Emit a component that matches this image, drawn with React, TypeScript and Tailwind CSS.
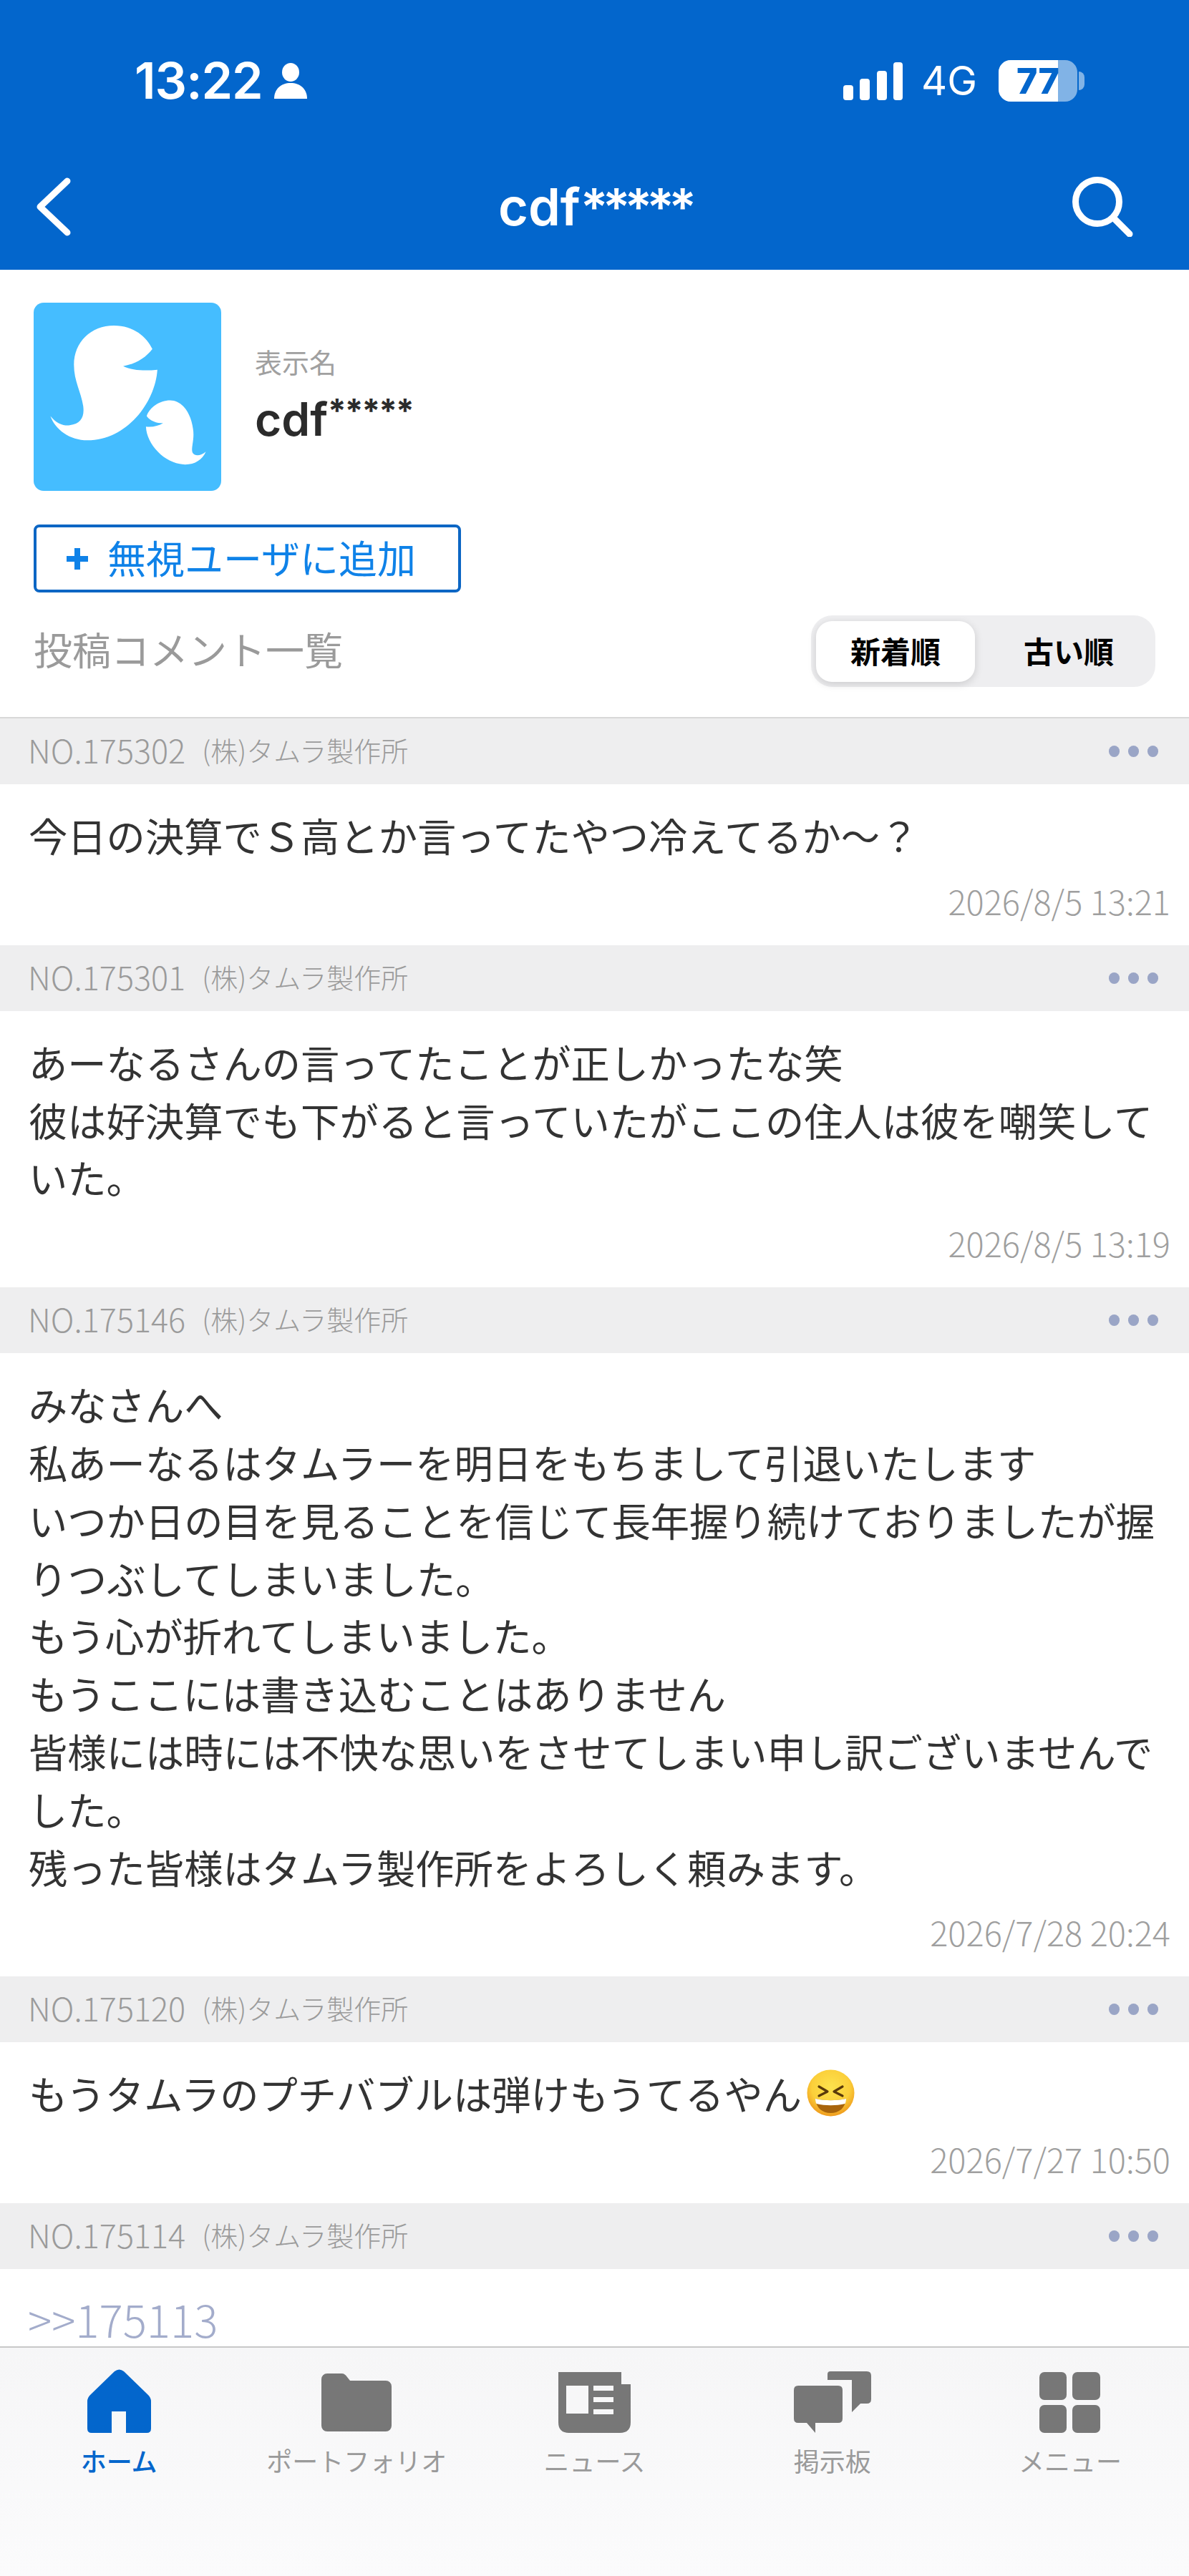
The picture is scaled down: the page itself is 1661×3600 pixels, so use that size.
const posts = [
  {
    no: "NO.175302",
    date: "2026/8/5 13:21",
    lines: ["今日の決算でＳ高とか言ってたやつ冷えてるか〜？"],
  },
  {
    no: "NO.175301",
    date: "2026/8/5 13:19",
    lines: ["あーなるさんの言ってたことが正しかったな笑", "彼は好決算でも下がると言っていたがここの住人は彼を嘲笑していた。"],
  },
  {
    no: "NO.175146",
    date: "2026/7/28 20:24",
    lines: [
      "みなさんへ",
      "私あーなるはタムラーを明日をもちまして引退いたします",
      "いつか日の目を見ることを信じて長年握り続けておりましたが握りつぶしてしまいました。",
      "もう心が折れてしまいました。",
      "もうここには書き込むことはありません",
      "皆様には時には不快な思いをさせてしまい申し訳ございませんでした。",
      "残った皆様はタムラ製作所をよろしく頼みます。",
    ],
  },
  {
    no: "NO.175120",
    date: "2026/7/27 10:50",
    lines: ["もうタムラのプチバブルは弾けもうてるやん"],
    emoji: true,
  },
];

function LaughEmoji() {
  return (
    <svg viewBox="0 0 67 66" className="ml-[7px] inline-block h-[66px] w-[67px] align-[-10px]">
      <defs>
        <radialGradient id="face" cx="50%" cy="38%" r="62%">
          <stop offset="0%" stopColor="#fde34e" />
          <stop offset="65%" stopColor="#fbcf3a" />
          <stop offset="100%" stopColor="#ef9a1c" />
        </radialGradient>
      </defs>
      <ellipse cx="33.5" cy="33" rx="33" ry="32.5" fill="url(#face)" />
      <path d="M17 24l12 7-12 6M50 24l-12 7 12 6" fill="none" stroke="#5a3a0a" strokeWidth="3.2" strokeLinecap="round" strokeLinejoin="round" />
      <path d="M12 41c14 3 29 3 43 0-1 13-10 20-21.500 20S13 54 12 41z" fill="#a8640c" />
      <path d="M12 41c14 3 29 3 43 0 0 3-.5 5-1.500 7-13 3-27 3-40 0-1-2-1.500-4-1.500-7z" fill="#fff" />
    </svg>
  );
}

function PostHeader({ no }: { no: string }) {
  return (
    <div className="flex h-[92px] items-center justify-between bg-[#eeeeef] pl-[39px] pr-[43px]">
      <div className="flex items-center gap-[23px] pb-[4px] font-light text-[#9b9b9b]">
        <span className="text-[45px] leading-[50px]">{no}</span>
        <span className="text-[38px] leading-[50px]">(株)タムラ製作所</span>
      </div>
      <div className="flex gap-[12px]">
        <span className="h-[16px] w-[15px] rounded-full bg-[#9aa5c6]" />
        <span className="h-[16px] w-[15px] rounded-full bg-[#9aa5c6]" />
        <span className="h-[16px] w-[15px] rounded-full bg-[#9aa5c6]" />
      </div>
    </div>
  );
}

function TabItem({ label, active, children }: { label: string; active?: boolean; children: React.ReactNode }) {
  return (
    <div className="flex flex-col items-center">
      <div className="flex h-[90px] items-end">{children}</div>
      <div className={`mt-[13px] text-[36px] leading-[50px] ${active ? "font-medium text-[#0366cc]" : "text-[#9a9a9a]"}`}>{label}</div>
    </div>
  );
}

export default function App() {
  return (
    <div
      lang="ja"
      className="flex h-[3600px] w-[1661px] flex-col overflow-hidden bg-white font-['Noto_Sans_CJK_JP','Noto_Sans',sans-serif]"
    >
      {/* Blue header */}
      <div className="h-[377px] shrink-0 bg-[#0366cc] text-white">
        <div className="flex h-[226px] items-center justify-between pl-[188px] pr-[146px]">
          <div className="flex items-center gap-[16px]">
            <span className="font-['Inter',sans-serif] text-[70px] leading-none font-semibold tracking-[-1px]">13:22</span>
            <svg viewBox="0 0 46 50" className="h-[50px] w-[46px]" fill="#fff">
              <ellipse cx="23" cy="13" rx="12" ry="13" />
              <path d="M0 50c0-14 10-22 23-22s23 8 23 22z" />
            </svg>
          </div>
          <div className="flex items-center">
            <svg viewBox="0 0 83 53" className="h-[53px] w-[83px]" fill="#fff">
              <rect x="0" y="32" width="14" height="21" rx="4" />
              <rect x="23" y="23" width="14" height="30" rx="4" />
              <rect x="47" y="12" width="14" height="41" rx="4" />
              <rect x="70" y="0" width="13" height="53" rx="4" />
            </svg>
            <span className="ml-[26px] font-['Inter',sans-serif] text-[56px] leading-none">4G</span>
            <div className="relative ml-[30px] flex h-[58px] w-[110px] items-center justify-center overflow-hidden rounded-[17px] bg-white/50">
              <div className="absolute inset-y-0 left-0 w-[83px] bg-white" />
              <span className="relative font-['Inter',sans-serif] text-[50px] leading-none font-extrabold text-[#0366cc]">77</span>
            </div>
            <div className="ml-[2px] h-[26px] w-[8px] rounded-r-full bg-white/50" />
          </div>
        </div>
        <div className="grid h-[126px] grid-cols-[1fr_auto_1fr] items-center px-[51px]">
          <svg viewBox="0 0 48 82" className="h-[82px] w-[48px]" fill="none" stroke="#fff" strokeWidth="9" strokeLinecap="round" strokeLinejoin="round">
            <path d="M43 5L5 41l38 36" />
          </svg>
          <span className="font-['Inter',sans-serif] text-[72px] leading-none font-semibold">
            cdf<span className="tracking-[-8px]">*****</span>
          </span>
          <svg viewBox="0 0 85 84" className="mr-[27px] h-[84px] w-[85px] justify-self-end" fill="none" stroke="#fff" strokeWidth="9" strokeLinecap="round">
            <circle cx="35" cy="35" r="30.500" />
            <path d="M58 58l22 22" />
          </svg>
        </div>
      </div>

      {/* Profile */}
      <div className="shrink-0 px-[47px] pt-[46px]">
        <div className="flex items-start">
          <div className="h-[263px] w-[262px] overflow-hidden rounded-[14px] bg-[#45bdff]">
            <svg viewBox="0 0 262 264" className="h-full w-full" fill="#fff">
              <path d="M112 32C140 32 158 48 166 65C156 78 142 86 125 89C138 95 155 96 173 94C170 140 130 193 75 193C50 193 30 178 23 159C32 170 42 173 50 172C66 170 71 160 69 145C66 125 56 110 56 87C56 55 80 32 112 32Z" />
              <path d="M191 137C176 137 162 147 158 159C163 166 172 169 181 169C175 173 166 175 157 174C158 200 185 227 212 227C226 227 236 220 241 209C235 214 229 215 225 213C217 209 226 195 223 177C220 155 208 137 191 137Z" />
            </svg>
          </div>
          <div className="ml-[47px] pt-[56px]">
            <div className="text-[38px] leading-[52px] text-[#a0a0a0]">表示名</div>
            <div className="mt-[20px] flex items-start font-['Inter',sans-serif] text-[64px] leading-[70px] font-semibold text-[#2b2b2b]">
              cdf<span className="text-[46px] leading-[46px] font-bold tracking-[-2px]">*****</span>
            </div>
          </div>
        </div>
        <div className="mt-[47px] flex h-[95px] w-[597px] items-center rounded-[8px] border-[4px] border-[#0c66c4] pl-[42px]">
          <svg viewBox="0 0 30 30" className="h-[30px] w-[30px]" fill="#0f82e8">
            <path d="M11 0h8v11h11v8H19v11h-8V19H0v-8h11z" />
          </svg>
          <span className="ml-[27px] pb-[3px] text-[54px] leading-none text-[#0f82e8]">無視ユーザに追加</span>
        </div>
        <div className="mt-[32px] flex h-[100px] items-center justify-between">
          <span className="pb-[6px] text-[54px] leading-none text-[#9a9a9a]">投稿コメント一覧</span>
          <div className="flex h-[100px] w-[481px] items-center rounded-[30px] bg-[#eeeef0] pl-[7px]">
            <div className="flex h-[85px] w-[222px] items-center justify-center rounded-[22px] bg-white pb-[4px] text-[42px] font-bold text-black shadow-[0_3px_12px_rgba(0,0,0,0.15)]">
              新着順
            </div>
            <div className="flex flex-1 items-center justify-center pb-[4px] pl-[10px] text-[42px] font-bold text-black">古い順</div>
          </div>
        </div>
      </div>

      {/* Post list */}
      <div className="mt-[42px] min-h-0 flex-1 border-t-2 border-[#d8d8d8]">
        {posts.map((post) => (
          <div key={post.no}>
            <PostHeader no={post.no} />
            <div className="px-[40px] pt-[31px] pb-[37px]">
              {post.lines.map((line) => (
                <div key={line} className="text-[54.3px] leading-[80.8px] text-[#333333]">
                  {line}
                  {post.emoji && <LaughEmoji />}
                </div>
              ))}
              <div className="-mr-[14px] mt-[26px] text-right text-[47px] leading-[50px] font-light text-[#9f9f9f]">{post.date}</div>
            </div>
          </div>
        ))}
        <PostHeader no="NO.175114" />
        <div className="px-[39px] pt-[34px] text-[62px] leading-[70px] font-light text-[#a3accb]">&gt;&gt;175113</div>
      </div>

      {/* Bottom tabs */}
      <div className="grid h-[321px] shrink-0 grid-cols-5 border-t-2 border-[#c8c8c8] bg-gradient-to-b from-[#f6f6f7] to-[#fbfbfc] pt-[29px]">
        <TabItem label="ホーム" active>
          <svg viewBox="0 0 89 89" className="h-[89px] w-[89px]">
            <path
              fillRule="evenodd"
              fill="#0366cc"
              d="M38 3Q44.500-2 51 3L85 36Q89 40 89 45V83Q89 89 83 89H54V59H34V89H6Q0 89 0 83V45Q0 40 4 36Z"
            />
          </svg>
        </TabItem>
        <TabItem label="ポートフォリオ">
          <svg viewBox="0 0 98 81" className="mb-[2px] h-[81px] w-[98px]" fill="#777777">
            <path d="M8 0H28C32 0 34 2 36 5L40 10H90A8 8 0 0 1 98 18V73A8 8 0 0 1 90 81H8A8 8 0 0 1 0 73V8A8 8 0 0 1 8 0Z" />
          </svg>
        </TabItem>
        <TabItem label="ニュース">
          <svg viewBox="0 0 101 85" className="h-[85px] w-[101px]">
            <path fill="#777777" d="M0 0H88V17H101V70Q101 85 86 85H15Q0 85 0 70Z" />
            <rect x="11" y="19" width="31" height="39" fill="#f7f7f8" />
            <rect x="49" y="19" width="28" height="7" fill="#f7f7f8" />
            <rect x="49" y="35" width="28" height="7" fill="#f7f7f8" />
            <rect x="49" y="52" width="28" height="7" fill="#f7f7f8" />
          </svg>
        </TabItem>
        <TabItem label="掲示板">
          <svg viewBox="0 0 108 86" className="h-[86px] w-[108px]" fill="#777777">
            <path d="M6 20H62Q68 20 68 26V66Q68 72 62 72H30L30 86L18 72H6Q0 72 0 66V26Q0 20 6 20Z" />
            <path d="M51 0H102Q108 0 108 6V39Q108 45 102 45H93L81 57V12Q81 12 78 12H47V4Q47 0 51 0Z" />
          </svg>
        </TabItem>
        <TabItem label="メニュー">
          <svg viewBox="0 0 85 85" className="h-[85px] w-[85px]" fill="#777777">
            <rect x="0" y="0" width="38" height="39" rx="7" />
            <rect x="46" y="0" width="39" height="39" rx="7" />
            <rect x="0" y="46" width="38" height="39" rx="7" />
            <rect x="46" y="46" width="39" height="39" rx="7" />
          </svg>
        </TabItem>
      </div>
    </div>
  );
}
